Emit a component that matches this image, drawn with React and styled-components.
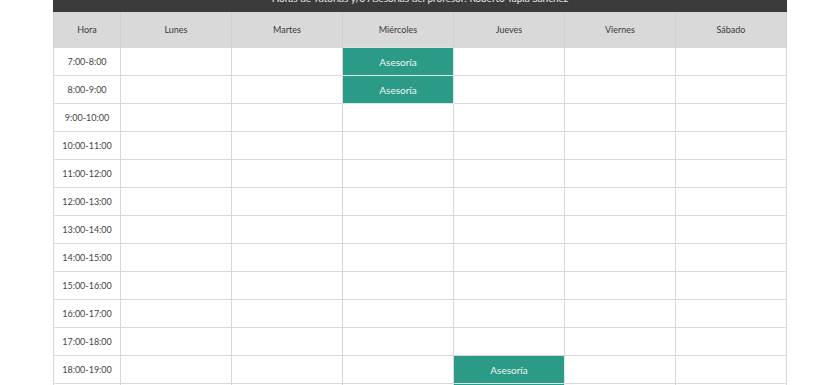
import React from "react";
import styled, { createGlobalStyle } from "styled-components";

const GlobalStyle = createGlobalStyle`
  html, body {
    margin: 0;
    padding: 0;
    background: #ffffff;
    overflow: hidden;
  }
  body {
    font-family: Lato, "Open Sans", sans-serif;
  }
`;

const days = ["Lunes", "Martes", "Miércoles", "Jueves", "Viernes", "Sábado"];

const hours = [
  "7:00-8:00",
  "8:00-9:00",
  "9:00-10:00",
  "10:00-11:00",
  "11:00-12:00",
  "12:00-13:00",
  "13:00-14:00",
  "14:00-15:00",
  "15:00-16:00",
  "16:00-17:00",
  "17:00-18:00",
  "18:00-19:00",
  "19:00-20:00",
];

// hora -> dias con asesoria
const sessions = {
  "7:00-8:00": ["Miércoles"],
  "8:00-9:00": ["Miércoles"],
  "18:00-19:00": ["Jueves"],
  "19:00-20:00": ["Jueves"],
};

const App = () => {
  return (
    <>
      <GlobalStyle />
      <Page>
        <Schedule>
          <TitleBar>
            Horas de Tutorías y/o Asesorías del profesor: Roberto Tapia Sánchez
          </TitleBar>
          <Table>
            <colgroup>
              <col style={{ width: 67 }} />
              {days.map((d) => (
                <col key={d} style={{ width: 111 }} />
              ))}
            </colgroup>
            <thead>
              <tr>
                <HeadCell>Hora</HeadCell>
                {days.map((d) => (
                  <HeadCell key={d}>{d}</HeadCell>
                ))}
              </tr>
            </thead>
            <tbody>
              {hours.map((h) => (
                <tr key={h}>
                  <HourCell>{h}</HourCell>
                  {days.map((d) => {
                    const busy = (sessions[h] || []).includes(d);
                    return (
                      <Cell key={d} $busy={busy}>
                        {busy ? "Asesoría" : ""}
                      </Cell>
                    );
                  })}
                </tr>
              ))}
            </tbody>
          </Table>
        </Schedule>
      </Page>
    </>
  );
};

export default App;

const Page = styled.div`
  width: 840px;
  height: 385px;
  overflow: hidden;
  display: flex;
  align-items: flex-start;
`;

const Schedule = styled.div`
  flex-shrink: 0;
  margin-left: 53px;
  margin-top: -22px;
  width: 734px;
  display: flex;
  flex-direction: column;
`;

const TitleBar = styled.div`
  flex-shrink: 0;
  height: 34px;
  background-color: #3b3b3b;
  color: #ececec;
  font-size: 10px;
  display: flex;
  align-items: center;
  justify-content: center;
  padding-top: 6px;
  box-sizing: border-box;
`;

const Table = styled.table`
  flex-shrink: 0;
  width: 734px;
  table-layout: fixed;
  border-collapse: collapse;
  font-size: 9px;
  color: #333333;
`;

const HeadCell = styled.th`
  height: 35px;
  padding: 0;
  background-color: #d9d9d9;
  border-left: 1px solid #cfcfcf;
  border-right: 1px solid #cfcfcf;
  font-weight: 400;
  text-align: center;
  color: #3a3a3a;
`;

const HourCell = styled.td`
  height: 27px;
  padding: 0;
  border: 1px solid #d8d8d8;
  text-align: center;
  color: #444444;
`;

const Cell = styled.td`
  height: 27px;
  padding: 0;
  border: 1px solid ${(p) => (p.$busy ? "#d8e9e5" : "#d8d8d8")};
  background-color: ${(p) => (p.$busy ? "#2b9a87" : "#ffffff")};
  color: #eef8f5;
  font-size: 10px;
  text-align: center;
`;
